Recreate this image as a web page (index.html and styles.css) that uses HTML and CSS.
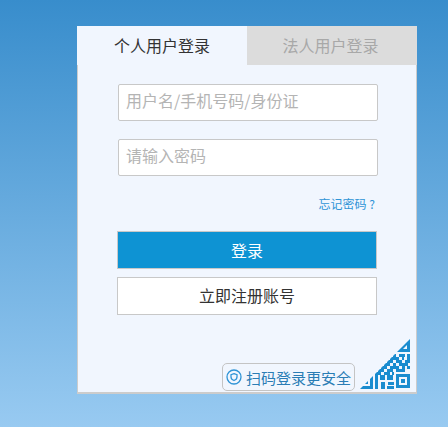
FILE: index.html
```html
<!DOCTYPE html>
<html lang="zh-CN">
  <head>
    <meta charset="UTF-8" />
    <title>用户登录</title>
    <link rel="stylesheet" href="styles.css">
  </head>
  <body>
    <div class="login-box">
      <div class="tabs">
        <div class="tab active">个人用户登录</div>
        <div class="tab">法人用户登录</div>
      </div>

      <div class="form-box">
        <input type="text" class="text-input" placeholder="用户名/手机号码/身份证" />
        <input type="password" class="text-input" placeholder="请输入密码" />
        <div class="forgot"><a href="#">忘记密码 ?</a></div>
        <button class="btn btn-login">登录</button>
        <button class="btn btn-register">立即注册账号</button>
      </div>

      <div class="scan-row">
        <div class="scan-tip">
          <svg class="scan-icon" viewBox="0 0 16 16" width="16" height="16">
            <circle cx="8" cy="8" r="7" fill="none" stroke="#2f94d6" stroke-width="1.3" />
            <path d="M8 4.6 L11 5.6 V8 C11 9.8 9.5 10.9 8 11.5 C6.5 10.9 5 9.8 5 8 V5.6 Z" fill="none" stroke="#2f94d6" stroke-width="1.3" />
          </svg>
          <span>扫码登录更安全</span>
        </div>
        <svg class="qr-corner" viewBox="0 0 50 50" width="50" height="50">
          <defs>
            <clipPath id="corner">
              <polygon points="0,50 50,0 50,50" />
            </clipPath>
          </defs>
          <g clip-path="url(#corner)" fill="#1a8ccf">
            <!-- top right finder -->
            <path d="M37 0 H50 V13 H37 Z M47 10 V6 L43 10 Z" fill-rule="evenodd" />
            <!-- bottom left finder -->
            <path d="M0 37 H13 V50 H0 Z M3 47 H10 V40 H3 Z" fill-rule="evenodd" />
            <rect x="5" y="42" width="3" height="3" />
            <!-- bottom right finder -->
            <path d="M36 35 H50 V49 H36 Z M39 46 H47 V38 H39 Z" fill-rule="evenodd" />
            <rect x="41" y="40" width="4" height="4" />
            <!-- data dots -->
            <path d="M33 15h3v3h-3z M39 15h6v3h-6z M47 15h3v3h-3z
                     M30 18h9v3h-9z M42 18h2v3h-2z M47 18h3v3h-3z
                     M27 21h6v3h-6z M36 21h6v3h-6z M45 21h5v3h-5z
                     M24 24h6v3h-6z M33 24h3v3h-3z M39 24h9v3h-9z
                     M21 27h6v3h-6z M30 27h9v3h-9z M42 27h3v3h-3z M47 27h3v3h-3z
                     M18 30h6v3h-6z M27 30h6v3h-6z M36 30h9v3h-9z
                     M15 33h6v3h-6z M24 33h6v3h-6z M32 33h2v3h-2z
                     M15 36h3v14h-3z M20 36h5v5h-5z M21 43h4v7h-4z
                     M27 36h6v5h-6z M28 43h6v3h-6z M27 47h7v3h-7z" />
          </g>
        </svg>
      </div>
    </div>
  </body>
</html>
```

FILE: styles.css
```css
* {
  box-sizing: border-box;
}

body {
  margin: 0;
  height: 427px;
  padding: 26px 31px 0 77px;
  overflow: hidden;
  font-family: "Noto Sans CJK SC", "Liberation Sans", sans-serif;
  background: linear-gradient(#388dcc, #98caf1);
  color: #333;
}

.login-box {
  width: 340px;
  height: 368px;
  display: flex;
  flex-direction: column;
  background: #f1f6fe;
  border-left: 1px solid #ccc;
  border-right: 1px solid #ccc;
  border-bottom: 2px solid #ccc;
}

.tabs {
  display: flex;
  margin: 0 -1px;
}

.tab {
  width: 50%;
  height: 39px;
  padding-right: 3px;
  line-height: 39px;
  text-align: center;
  font-size: 16px;
  color: #a8a8a8;
  background: #dcdcdc;
}

.tab.active {
  padding-right: 0;
  color: #333;
  background: #f1f6fe;
}

.form-box {
  display: flex;
  flex-direction: column;
  padding: 19px 39px 0 40px;
}

.text-input {
  width: 260px;
  height: 37px;
  margin-bottom: 18px;
  padding: 0 7px 6px 7px;
  border: 1px solid #c8c8c8;
  border-radius: 2px;
  background: #fff;
  font-family: inherit;
  font-size: 16px;
}

.text-input::placeholder {
  color: #b4b4b4;
}

.forgot {
  height: 37px;
  padding: 1px 2px 0 0;
  text-align: right;
  font-size: 12px;
  line-height: 18px;
}

.forgot a {
  color: #2f94d6;
  text-decoration: none;
}

.btn {
  width: 260px;
  height: 38px;
  margin-left: -1px;
  border: 1px solid #c8c8c8;
  font-family: inherit;
  font-size: 16px;
  cursor: pointer;
}

.btn-login {
  margin-bottom: 8px;
  padding-bottom: 2px;
  background: #0e93d3;
  color: #fff;
}

.btn-register {
  padding-bottom: 3px;
  background: #fff;
  color: #333;
}

.scan-row {
  display: flex;
  align-items: flex-end;
  margin-top: auto;
  padding: 0 6px 3px 144px;
}

.scan-tip {
  display: flex;
  align-items: center;
  gap: 4px;
  width: 133px;
  height: 28px;
  margin-bottom: -2px;
  padding-left: 3px;
  border: 1px solid #c4c4c4;
  border-radius: 5px;
  font-size: 15px;
  color: #2a7db5;
  white-space: nowrap;
}

.scan-icon {
  flex: none;
}

.qr-corner {
  flex: none;
  margin-left: 5px;
}
```
